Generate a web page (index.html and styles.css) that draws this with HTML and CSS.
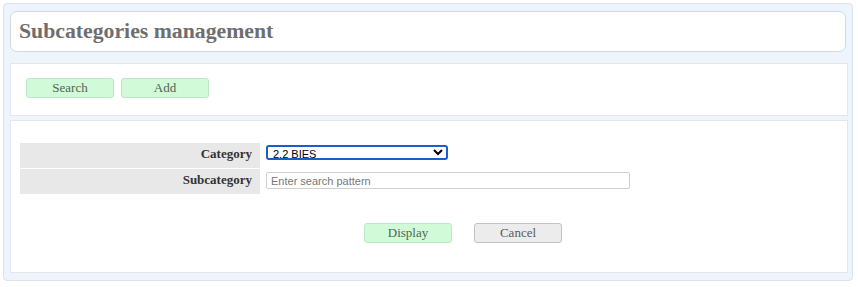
FILE: index.html
```html
<!DOCTYPE html>
<html>
<head>
<meta charset="utf-8">
<link rel="stylesheet" href="styles.css">
</head>
<body>
<div class="frame">
  <div class="title-box"><h1 class="title">Subcategories management</h1></div>
  <div class="panel toolbar">
    <button class="btn btn-green">Search</button>
    <button class="btn btn-green">Add</button>
  </div>
  <div class="panel form-panel">
    <div class="form-grid">
      <div class="label">Category</div>
      <div class="field">
        <select class="select"><option>2.2 BIES</option></select>
      </div>
      <div class="label">Subcategory</div>
      <div class="field">
        <input class="input" type="text" placeholder="Enter search pattern">
      </div>
    </div>
    <div class="actions">
      <button class="btn btn-green">Display</button>
      <button class="btn btn-gray">Cancel</button>
    </div>
  </div>
</div>
</body>
</html>
```
FILE: styles.css
```css
html, body { margin: 0; padding: 0; background: #ffffff; }
body { padding: 3px; font-family: "Liberation Serif", "Times New Roman", serif; }
.frame {
  width: 850px;
  height: 278px;
  box-sizing: border-box;
  background: #eef4fb;
  border: 1px solid #dde3ea;
  border-radius: 4px;
  padding: 7px 4px 0 6px;
  display: flex;
  flex-direction: column;
}
.title-box {
  height: 41px;
  box-sizing: border-box;
  margin-right: 2px;
  background: #ffffff;
  border: 1px solid #d3d9df;
  border-radius: 7px;
  padding: 0 8px;
  display: flex;
  align-items: center;
}
.title {
  margin: 0;
  font-size: 21.75px;
  font-weight: bold;
  color: #6e6e6e;
}
.panel {
  background: #ffffff;
  border: 1px solid #e2e7ec;
  box-sizing: border-box;
}
.toolbar {
  margin-top: 11px;
  height: 53px;
  padding: 14px 15px;
  display: flex;
  gap: 7px;
  align-items: flex-start;
}
.btn {
  width: 88px;
  height: 20px;
  box-sizing: border-box;
  font-family: "Liberation Serif", "Times New Roman", serif;
  font-size: 13px;
  border-radius: 3px;
  padding: 0;
  line-height: 18px;
}
.btn-green { background: #d1fad8; border: 1px solid #bde8c6; color: #4f6650; }
.btn-gray { background: #ececec; border: 1px solid #c2c2c2; color: #5a5a5a; }
.form-panel {
  margin-top: 4px;
  height: 153px;
  padding: 22px 9px 0 9px;
}
.form-grid {
  display: grid;
  grid-template-columns: 240px 1fr;
  grid-auto-rows: 25px;
  row-gap: 1px;
}
.label {
  background: #e8e8e8;
  font-weight: bold;
  font-size: 13px;
  color: #333333;
  text-align: right;
  padding-right: 8px;
  line-height: 22px;
}
.field { padding-left: 6px; display: flex; align-items: flex-start; }
.select {
  margin-top: 2px;
  width: 182px;
  height: 15px;
  box-sizing: border-box;
  font-family: "Liberation Sans", Arial, sans-serif;
  font-size: 11px;
  border: 2px solid #1a5fc8;
  border-radius: 3px;
  padding: 0 0 0 1px;
  background: #ffffff;
  color: #000;
}
.input {
  margin-top: 3px;
  width: 364px;
  height: 17px;
  box-sizing: border-box;
  font-family: "Liberation Sans", Arial, sans-serif;
  font-size: 11px;
  border: 1px solid #cfcfcf;
  border-radius: 2px;
  padding: 0 4px;
}
.input::placeholder { color: #777777; }
.actions {
  margin-top: 29px;
  padding-left: 344px;
  display: flex;
  gap: 22px;
}
```
